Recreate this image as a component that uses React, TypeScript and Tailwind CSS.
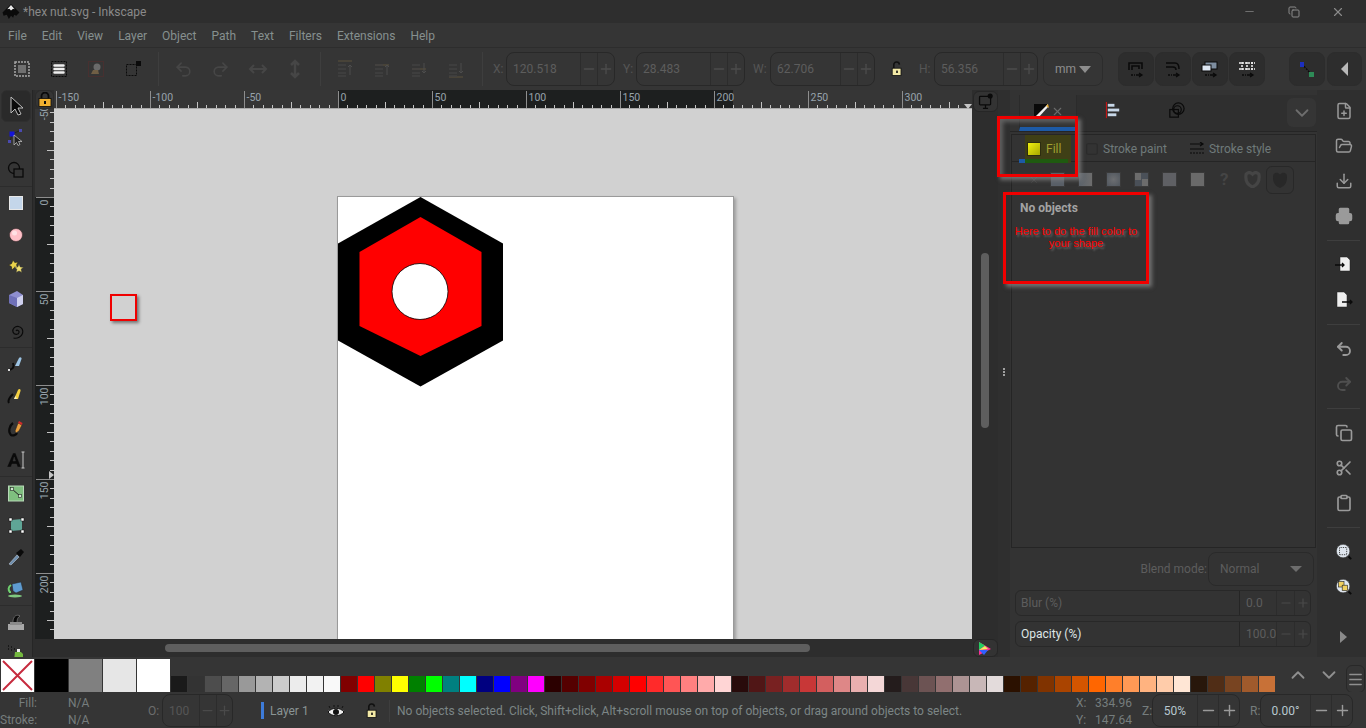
import { Minus, Plus, ChevronDown, ChevronUp, FilePlus, FolderOpen, Download, Printer, Undo2, Redo2, Copy, Scissors, Clipboard, Menu, X, Square } from "lucide-react";
import type { ReactNode } from "react";

const menuItems = ["File", "Edit", "View", "Layer", "Object", "Path", "Text", "Filters", "Extensions", "Help"];

const grays = ["bg-[#1a1a1a]", "bg-[#333333]", "bg-[#4d4d4d]", "bg-[#666666]", "bg-[#999999]", "bg-[#b3b3b3]", "bg-[#cccccc]", "bg-[#ececec]", "bg-[#f2f2f2]", "bg-[#f9f9f9]"];
const basics = ["bg-[#800000]", "bg-[#ff0000]", "bg-[#808000]", "bg-[#ffff00]", "bg-[#008000]", "bg-[#00ff00]", "bg-[#008080]", "bg-[#00ffff]", "bg-[#000080]", "bg-[#0000ff]", "bg-[#800080]", "bg-[#ff00ff]"];
const reds = ["bg-[#2b0000]", "bg-[#550000]", "bg-[#800000]", "bg-[#aa0000]", "bg-[#d40000]", "bg-[#ff0000]", "bg-[#ff2a2a]", "bg-[#ff5555]", "bg-[#ff8080]", "bg-[#ffaaaa]", "bg-[#ffd5d5]"];
const dullReds = ["bg-[#280b0b]", "bg-[#501616]", "bg-[#782121]", "bg-[#a02c2c]", "bg-[#c83737]", "bg-[#d35f5f]", "bg-[#de8787]", "bg-[#e9afaf]", "bg-[#f4d7d7]"];
const browns = ["bg-[#241c1c]", "bg-[#483737]", "bg-[#6c5353]", "bg-[#916f6f]", "bg-[#ac9393]", "bg-[#c8b7b7]", "bg-[#e3dbdb]"];
const oranges = ["bg-[#2b1100]", "bg-[#552200]", "bg-[#803300]", "bg-[#aa4400]", "bg-[#d45500]", "bg-[#ff6600]", "bg-[#ff7f2a]", "bg-[#ff9955]", "bg-[#ffb380]", "bg-[#ffccaa]", "bg-[#ffe6d5]"];
const dullOranges = ["bg-[#28170b]", "bg-[#502d16]", "bg-[#784421]", "bg-[#a05a2c]", "bg-[#c87137]"];
const swatches = [...grays, ...basics, ...reds, ...dullReds, ...browns, ...oranges, ...dullOranges];

const PX_PER_UNIT = 1.88;

function Svg({ children, size = 20 }: { children: ReactNode; size?: number }) {
  return (
    <svg width={size} height={size} viewBox="0 0 20 20" fill="none">
      {children}
    </svg>
  );
}

function OpenLock() {
  return (
    <Svg size={16}>
      <path d="M6 9V5a3.500 3.500 0 0 1 7-.5" stroke="#111" strokeWidth="2" />
      <rect x="4" y="9" width="11" height="9" fill="#f3e9a6" stroke="#111" />
      <rect x="9" y="12" width="2" height="3" fill="#111" />
    </Svg>
  );
}

const toolIcons: ReactNode[] = [
  <path d="M5 1v16l4-4 3 6 3-1-3-6h5z" fill="#0a0a0a" stroke="#bdbdbd" strokeWidth="1" />,
  <>
    <path d="M6 6l7-3M6 6L4 14" stroke="#222" />
    <rect x="3.500" y="3.500" width="5" height="5" fill="#1414d8" />
    <rect x="13" y="1" width="3" height="3" fill="#4a4ab0" />
    <rect x="2" y="12" width="3" height="3" fill="#4a4ab0" />
    <path d="M8 7v10l2.500-2.500 1.500 3 2-1-1.500-3H16z" fill="#222" stroke="#ccc" strokeWidth=".7" />
  </>,
  <>
    <circle cx="8" cy="8" r="5.500" stroke="#0a0a0a" strokeWidth="1.300" />
    <rect x="8" y="9" width="9" height="8" fill="#353535" stroke="#0a0a0a" strokeWidth="1.300" />
  </>,
  <rect x="3.500" y="3.500" width="13" height="13" fill="#c4d6ea" stroke="#e8e8e8" strokeWidth="1" />,
  <>
    <circle cx="10" cy="10" r="6.500" fill="#ffc0c8" stroke="#3a2a2a" strokeWidth=".6" />
    <circle cx="8.500" cy="8" r="2.500" fill="#ffe0e4" />
  </>,
  <>
    <path d="M7 3l1.800 2.600L12 5l-1.500 3 1.500 3-3.500-.6L6 13l-.6-3.400L2.500 8l3-1.300z" fill="#e8d24a" stroke="#222" strokeWidth=".6" />
    <path d="M13 7l1.300 3 3.200.2-2.400 2.100.8 3.200L13 14l-2.900 1.500.8-3.200-2.400-2.100 3.200-.2z" fill="#f0e070" stroke="#333" strokeWidth=".5" />
  </>,
  <>
    <path d="M3 6l8-4 6 4v9l-6 3-8-4z" fill="#8f8fd0" />
    <path d="M11 9l6-3v9l-6 3z" fill="#cfd0ee" />
    <path d="M3 6l8 3v9l-8-4z" fill="#6f70b8" />
  </>,
  <path d="M10 10c1-1.500 3.500-.5 3 1.500-.5 2.500-5 2.500-6-.5s2-6 5.500-5.500 5 4 4 7-5 5.500-9 4.500" stroke="#0a0a0a" strokeWidth="1.200" />,
  <>
    <path d="M2 16c3 0 7-2 5-7" stroke="#0a0a0a" strokeWidth="2" />
    <path d="M9 12l4-8c1-1.500 3-.5 2.500 1L13 12z" fill="#9cc4e4" />
    <rect x="2" y="15" width="2" height="2" fill="#ddd" />
  </>,
  <>
    <path d="M3 17c-2-3 2-7 4-9" stroke="#0a0a0a" strokeWidth="2" />
    <path d="M8 13l4-9c1-2 3-1 2.500 1L12 13z" fill="#f4d040" />
    <path d="M11 13l-3 0 1.500-3z" fill="#f7f0c0" />
  </>,
  <>
    <path d="M7 5c-4 3-5 9-2 12 2 1 5 0 6-2" stroke="#0a0a0a" strokeWidth="2.200" />
    <path d="M9 13l3-8 4 2-3 6-3 2z" fill="#e8a040" stroke="#222" strokeWidth=".6" />
    <path d="M12 5l1-2 3.500 2-.5 2z" fill="#d02a2a" />
  </>,
  <>
    <path d="M1 17L7 3h2.500L15 17h-3.500l-1-3H6l-1 3zM7 11h2.500L8.200 7z" fill="#0a0a0a" stroke="#3a3a3a" strokeWidth=".4" />
    <path d="M17 2v16M15.500 2h3M15.500 18h3" stroke="#c8c8c8" strokeWidth="1" />
  </>,
  <>
    <rect x="2.500" y="3" width="15" height="15" fill="#7fbf7f" stroke="#b8d8b8" />
    <path d="M6 6l8 7" stroke="#222" />
    <rect x="4.500" y="4.500" width="3" height="3" fill="#cfe8cf" stroke="#222" strokeWidth=".6" />
    <rect x="12.500" y="11.500" width="3" height="3" fill="#cfe8cf" stroke="#222" strokeWidth=".6" />
  </>,
  <>
    <path d="M5 5l11-1 0 11-11 1z" fill="#5fa596" />
    <rect x="3" y="3" width="3" height="3" fill="#fff" stroke="#111" strokeWidth=".5" />
    <rect x="15" y="3" width="3" height="3" fill="#fff" stroke="#111" strokeWidth=".5" />
    <rect x="3" y="15" width="3" height="3" fill="#fff" stroke="#111" strokeWidth=".5" />
    <rect x="15" y="15" width="3" height="3" fill="#fff" stroke="#111" strokeWidth=".5" />
  </>,
  <>
    <path d="M3 17l8-9 2 2-8 8z" fill="#6f8faf" stroke="#c8d4e0" strokeWidth=".5" />
    <path d="M10 6l5-4 3 3-4 5z" fill="#0a0a0a" />
  </>,
  <>
    <path d="M6 5l9-2 2 8-7 3-3-2z" fill="#5e9bd0" stroke="#222" strokeWidth=".5" />
    <path d="M5 6c-3 2-3 5-1 7v1" stroke="#6ed06e" strokeWidth="2" />
    <ellipse cx="9" cy="17" rx="7" ry="1.500" fill="#7fc87f" />
  </>,
  <>
    <rect x="2" y="12" width="16" height="6" fill="#a8a8a8" />
    <rect x="4" y="10" width="12" height="3" fill="#8a8a8a" />
    <path d="M7 10c0-6 4-8 7-6-2 1-3 3-3 6" fill="#0a0a0a" stroke="#bbb" strokeWidth=".4" />
  </>,
  <>
    <path d="M9 8h6l2 2v6H8z" fill="#74b83f" />
    <rect x="11" y="5" width="3" height="3" fill="#eee" />
    <path d="M2 2h1M5 3h1M2 5h1M5 6h1M8 5h1" stroke="#111" strokeWidth="1.500" />
  </>,
];

function ToolButton({ active, children }: { active?: boolean; children: ReactNode }) {
  return (
    <div className={`mx-[1px] flex h-[32px] shrink-0 items-center justify-center rounded-md ${active ? "bg-[#2a2a2a] border border-[#2f2f2f]" : ""}`}>
      <Svg>{children}</Svg>
    </div>
  );
}

function LeftToolbar() {
  const separators = [3, 8, 12, 16];
  return (
    <div className="flex h-full w-[33px] shrink-0 flex-col overflow-hidden border-r border-[#262626] bg-[#353535]">
      {toolIcons.map((icon, i) => (
        <div key={i}>
          {separators.includes(i) && <div className="h-[1px] bg-[#2c2c2c]" />}
          <ToolButton active={i === 0}>{icon}</ToolButton>
        </div>
      ))}
    </div>
  );
}

function TopBarButton({ children }: { children: ReactNode }) {
  return <div className="flex h-[34px] w-[37px] shrink-0 items-center justify-center">{children}</div>;
}

function BarSep() {
  return (
    <div className="flex h-full w-[14px] shrink-0 justify-center py-[4px]">
      <div className="w-[1px] bg-[#3e3e3e]" />
    </div>
  );
}

function SpinBox({ value, className }: { value: string; className: string }) {
  return (
    <div className={`flex h-[34px] shrink-0 items-center rounded-lg border border-[#282828] text-[#5d5d5d] ${className}`}>
      <span className="flex-1 pl-[6px] text-[12px]">{value}</span>
      <span className="flex h-full w-[17px] items-center justify-center border-l border-[#2c2c2c]">
        <Minus size={16} className="text-[#4c4c4c]" />
      </span>
      <span className="flex h-full w-[17px] items-center justify-center border-l border-[#2c2c2c]">
        <Plus size={16} className="text-[#4c4c4c]" />
      </span>
    </div>
  );
}

function DarkButton({ children, className }: { children: ReactNode; className: string }) {
  return <div className={`flex h-[34px] shrink-0 items-center justify-center rounded-lg border border-[#2c2c2c] bg-[#2d2d2d] ${className}`}>{children}</div>;
}

function SnapIcon({ children }: { children: ReactNode }) {
  return (
    <Svg>
      {children}
      <path d="M10 16h6M13 14l3 2-3 2" stroke="#0a0a0a" strokeWidth="1.300" />
      <path d="M5 16h2M8 16h1" stroke="#0a0a0a" strokeWidth="1.300" />
    </Svg>
  );
}

function TopToolbar() {
  const dim = "#464646";
  return (
    <div className="flex h-[43px] shrink-0 items-center border-t border-[#2d2d2d] bg-[#353535] pl-[3px]">
      <TopBarButton>
        <Svg>
          <rect x="3" y="3" width="14" height="14" stroke="#a8a8a8" strokeWidth="1.500" strokeDasharray="2 1" />
          <rect x="6" y="6" width="8" height="8" fill="#707070" />
        </Svg>
      </TopBarButton>
      <TopBarButton>
        <Svg>
          <rect x="2.500" y="2.500" width="15" height="15" stroke="#0a0a0a" strokeDasharray="2 1" />
          <path d="M5.500 6.500h9M5.500 10h9M5.500 13.500h9" stroke="#eee" strokeWidth="2.500" strokeLinecap="round" />
        </Svg>
      </TopBarButton>
      <TopBarButton>
        <Svg>
          <rect x="2.500" y="2.500" width="15" height="15" stroke="#5a2c2c" strokeDasharray="1 1" />
          <circle cx="11" cy="8" r="3.500" fill="#6a6a6a" />
          <path d="M5 15l2-4h5l1 4z" fill="#705f45" />
        </Svg>
      </TopBarButton>
      <TopBarButton>
        <Svg>
          <rect x="3.500" y="5.500" width="10" height="11" stroke="#0a0a0a" strokeDasharray="2 1" />
          <rect x="13" y="2" width="5" height="5" fill="#0a0a0a" />
        </Svg>
      </TopBarButton>
      <BarSep />
      <TopBarButton>
        <Undo2 size={19} className="text-[#464646]" />
      </TopBarButton>
      <TopBarButton>
        <Redo2 size={19} className="text-[#464646]" />
      </TopBarButton>
      <TopBarButton>
        <Svg>
          <path d="M2 10h16M6 6l-4 4 4 4M14 6l4 4-4 4" stroke={dim} strokeWidth="2" />
        </Svg>
      </TopBarButton>
      <TopBarButton>
        <Svg>
          <path d="M10 2v16M6 6l4-4 4 4M6 14l4 4 4-4" stroke={dim} strokeWidth="2.500" />
        </Svg>
      </TopBarButton>
      <BarSep />
      {[0, 1, 2, 3].map((i) => (
        <TopBarButton key={i}>
          <Svg>
            <path d={i === 0 ? "M2 2h14" : i === 3 ? "M2 18h14" : i === 2 ? "M2 10h14" : "M2 6h14"} stroke="#544c3c" strokeWidth="1.300" />
            <path d="M2 6h8M2 10h8M2 14h8M2 17h8" stroke="#424242" strokeWidth="1.500" />
            <path d={i < 2 ? "M14 16V6M12 8l2-2 2 2" : "M14 4v10M12 12l2 2 2-2"} stroke="#4d4d4d" strokeWidth="1" />
          </Svg>
        </TopBarButton>
      ))}
      <BarSep />
      <span className="w-[17px] shrink-0 pl-[4px] text-[12px] text-[#555555]">X:</span>
      <SpinBox value="120.518" className="w-[109px]" />
      <span className="w-[21px] shrink-0 pl-[8px] text-[12px] text-[#555555]">Y:</span>
      <SpinBox value="28.483" className="w-[109px]" />
      <span className="w-[25px] shrink-0 pl-[8px] text-[12px] text-[#555555]">W:</span>
      <SpinBox value="62.706" className="w-[105px]" />
      <div className="flex w-[44px] shrink-0 justify-center">
        <OpenLock />
      </div>
      <span className="w-[15px] shrink-0 text-[12px] text-[#555555]">H:</span>
      <SpinBox value="56.356" className="w-[104px]" />
      <div className="ml-[5px] flex h-[34px] w-[60px] shrink-0 items-center justify-center gap-[3px] rounded-lg border border-[#2c2c2c] text-[12px] text-[#8d8d8d]">
        mm
        <span className="h-0 w-0 border-x-[6px] border-t-[7px] border-x-transparent border-t-[#8d8d8d]" />
      </div>
      <div className="ml-[15px] flex gap-[1px]">
        <DarkButton className="w-[36px]">
          <SnapIcon>
            <path d="M3 11V4h13v6M6 11V7h7v3" stroke="#0a0a0a" strokeWidth="1.600" />
          </SnapIcon>
        </DarkButton>
        <DarkButton className="w-[36px]">
          <SnapIcon>
            <path d="M3 4h9c3 0 4 2 4 6M3 8h7c2 0 3 1 3 3" stroke="#0a0a0a" strokeWidth="1.500" />
          </SnapIcon>
        </DarkButton>
        <DarkButton className="w-[36px]">
          <SnapIcon>
            <rect x="5" y="3" width="12" height="7" fill="#7e8ea0" stroke="#0a0a0a" />
            <rect x="2" y="6" width="9" height="6" fill="#dde6f2" stroke="#0a0a0a" />
          </SnapIcon>
        </DarkButton>
        <DarkButton className="w-[36px]">
          <SnapIcon>
            <path d="M2 4h16M2 10h16M5 3v8M10 3v8M15 3v8" stroke="#f2f2f2" strokeWidth="1.500" strokeDasharray="2 1" />
          </SnapIcon>
        </DarkButton>
      </div>
      <div className="ml-[24px] flex gap-[2px]">
        <DarkButton className="w-[36px]">
          <Svg>
            <path d="M5 5l10 11" stroke="#0a0a0a" strokeWidth="1.300" strokeDasharray="2 1" />
            <rect x="3" y="3" width="4" height="5" fill="#1c2fc0" />
            <rect x="12" y="13" width="5" height="5" fill="#2e8b57" />
          </Svg>
        </DarkButton>
        <DarkButton className="w-[35px]">
          <span className="h-0 w-0 border-y-[7px] border-r-[7px] border-y-transparent border-r-[#b9b9b9]" />
        </DarkButton>
      </div>
    </div>
  );
}

function HRuler() {
  const zero = 284;
  const ticks = [];
  for (let i = -30; i <= 68; i++) {
    const x = Math.round(zero + i * 5 * PX_PER_UNIT) + 0.5;
    const major = i % 10 === 0;
    const mid = i % 5 === 0;
    const h = major ? 18 : mid ? 7 : 4;
    ticks.push(<line key={i} x1={x} x2={x} y1={19 - h} y2={19} stroke={major ? "#8e8e8e" : "#c4c4c4"} />);
    if (major) {
      ticks.push(
        <text key={`l${i}`} x={x + 2} y={11} fontSize="10.500" fill="#97a3ab">
          {i * 5}
        </text>,
      );
    }
  }
  return (
    <svg width="918" height="19" className="block">
      <rect width="918" height="19" fill="#363636" />
      <rect x={zero} width="395" height="19" fill="#1d1f1f" />
      {ticks}
      <line x1="0" x2="918" y1="18.500" y2="18.500" stroke="#a9a9a9" />
      <path d="M910 14h8l-4 5z" fill="#c4c4c4" />
    </svg>
  );
}

function VRuler() {
  const zero = 88;
  const ticks = [];
  for (let i = -10; i <= 48; i++) {
    const y = Math.round(zero + i * 5 * PX_PER_UNIT) + 0.5;
    const major = i % 10 === 0;
    const mid = i % 5 === 0;
    const w = major ? 18 : mid ? 7 : 4;
    ticks.push(<line key={i} y1={y} y2={y} x1={19 - w} x2={19} stroke={major ? "#8e8e8e" : "#c4c4c4"} />);
    if (major) {
      ticks.push(
        <text key={`l${i}`} x={13} y={y + 2} fontSize="10.500" fill="#97a3ab" textAnchor="end" transform={`rotate(-90 13 ${y + 2})`}>
          {i * 5}
        </text>,
      );
    }
  }
  return (
    <svg width="19" height="530" className="block shrink-0">
      <rect width="19" height="530" fill="#363636" />
      <rect y={zero} width="19" height="442" fill="#1d1f1f" />
      {ticks}
      <path d="M14 362l5 4-5 4z" fill="#c4c4c4" />
    </svg>
  );
}

function HexNut() {
  return (
    <svg width="170" height="195" className="absolute left-0 top-0">
      <path d="M82.500 0l82.500 46.500v97l-82.500 46-82.500-46v-97z" fill="#000" />
      <path d="M82.500 20l61 35v74l-61 30-61-30V55z" fill="#ff0000" />
      <circle cx="82" cy="94.500" r="28" fill="#fff" stroke="#000" strokeWidth=".8" />
    </svg>
  );
}

function CanvasArea() {
  return (
    <div className="flex h-full w-[937px] shrink-0 flex-col">
      <div className="flex h-[19px] shrink-0">
        <div className="flex w-[19px] shrink-0 items-center justify-center rounded-md border border-[#2b2b2b] bg-[#353535]">
          <svg width="14" height="15" viewBox="0 0 14 15" fill="none">
            <path d="M3.500 7V4a3.500 3.500 0 0 1 7 0v3" stroke="#0a0a0a" strokeWidth="1.800" />
            <rect x="1" y="6.500" width="12" height="8" fill="#f0b030" stroke="#0a0a0a" strokeWidth=".8" />
            <rect x="6" y="9" width="2" height="3" fill="#0a0a0a" />
          </svg>
        </div>
        <HRuler />
      </div>
      <div className="flex h-[530px] shrink-0">
        <VRuler />
        <div className="relative flex-1 overflow-hidden bg-[#d1d1d1]">
          <div className="absolute left-[283px] top-[87px] h-[460px] w-[397px] border border-[#9a9a9a] bg-white shadow-[2px_2px_3px_rgba(0,0,0,0.25)]">
            <HexNut />
          </div>
          <div className="absolute left-[56px] top-[185px] h-[27px] w-[27px] border-2 border-[#f00000] shadow-[2px_2px_3px_rgba(0,0,0,0.45)]" />
        </div>
      </div>
      <div className="flex h-[18px] shrink-0 items-center bg-[#2d2d2d] pl-[130px]">
        <div className="h-[8px] w-[645px] rounded-full bg-[#5e5e5e]" />
      </div>
    </div>
  );
}

function VScrollColumn() {
  return (
    <div className="flex h-full w-[26px] shrink-0 flex-col items-center bg-[#2d2d2d]">
      <div className="mt-[1px] flex h-[21px] w-[25px] shrink-0 items-center justify-center rounded-md border border-[#262626] bg-[#333333]">
        <Svg size={17}>
          <rect x="3" y="4" width="13" height="10" rx="1" stroke="#0a0a0a" strokeWidth="1.500" />
          <path d="M7 18h6M10 14v4" stroke="#0a0a0a" strokeWidth="1.500" />
          <circle cx="15.500" cy="3.500" r="3" fill="#0a0a0a" />
        </Svg>
      </div>
      <div className="mt-[141px] h-[175px] w-[8px] shrink-0 rounded-full bg-[#5e5e5e]" />
      <div className="mt-auto flex h-[18px] w-[25px] shrink-0 items-center justify-center rounded-md border border-[#262626] bg-[#333333]">
        <svg width="14" height="15" viewBox="0 0 14 15">
          <path d="M1 1l12 7-12 6z" fill="#ff3090" />
          <path d="M1 1l6 3.500L1 9z" fill="#22d060" />
          <path d="M1 9l6-4 3 3z" fill="#f0f060" />
          <path d="M1 9l5 5 4-5z" fill="#3060ff" />
        </svg>
      </div>
    </div>
  );
}

function PaintButton({ className }: { className: string }) {
  return <div className={`h-[15px] w-[15px] shrink-0 border border-[#3a3a3a] ${className}`} />;
}

function DockPanel() {
  return (
    <div className="flex h-full w-[307px] shrink-0 flex-col bg-[#333333] text-[12px]">
      <div className="mt-[5px] flex h-[37px] shrink-0 border-b border-[#252525]">
        <div className="ml-[9px] flex w-[58px] shrink-0 items-start justify-center border-x border-[#2b2b2b] border-b-4 border-b-[#1d5aa6] pt-[8px]">
          <svg width="17" height="17" viewBox="0 0 17 17">
            <path d="M1 1h14L1 15z" fill="#0a0a0a" />
            <path d="M15 1v3L5 15H1z" fill="#f2f2f2" />
            <path d="M13 3l2-2 1 4z" fill="#f0b030" />
          </svg>
          <X size={13} className="ml-[1px] mt-[2px] text-[#6b6b6b]" />
        </div>
        <div className="flex flex-1 items-start bg-[#2f2f2f]">
          <div className="ml-[27px] pt-[6px]">
            <Svg size={19}>
              <path d="M2.500 1v17" stroke="#e01010" />
              <rect x="4" y="3" width="7" height="3" fill="#c8d8e8" />
              <rect x="4" y="8" width="12" height="3" fill="#c8d8e8" />
              <rect x="4" y="13" width="9" height="3" fill="#c8d8e8" />
            </Svg>
          </div>
          <div className="ml-[44px] pt-[6px]">
            <Svg size={19}>
              <circle cx="12" cy="8" r="6" stroke="#0a0a0a" strokeWidth="1.300" />
              <circle cx="11" cy="9" r="4" stroke="#0a0a0a" strokeWidth="1.300" />
              <rect x="3" y="9" width="9" height="8" stroke="#0a0a0a" strokeWidth="1.300" />
            </Svg>
          </div>
          <div className="ml-auto mr-[1px] mt-[3px] flex h-[29px] w-[29px] items-center justify-center rounded-md bg-[#353535]">
            <ChevronDown size={22} className="text-[#6d6d6d]" />
          </div>
        </div>
      </div>
      <div className="ml-[1px] mr-[1px] mt-[2px] flex h-[414px] shrink-0 flex-col border border-[#252525]">
        <div className="flex h-[27px] shrink-0 items-center border-b border-[#252525] pl-[73px] pt-[1px]">
          <Square size={14} className="text-[#2a2a2a]" />
          <span className="ml-[4px] text-[#6f7a7a]">Stroke paint</span>
          <svg width="15" height="13" viewBox="0 0 15 13" className="ml-[23px]">
            <path d="M0 2h13M10 0l3 2-3 2M0 7h14" stroke="#0a0a0a" strokeWidth="1.200" fill="none" />
            <path d="M0 11h14" stroke="#0a0a0a" strokeWidth="1.200" strokeDasharray="2 1" />
          </svg>
          <span className="ml-[4px] text-[#6f7a7a]">Stroke style</span>
        </div>
        <div className="mt-[10px] flex h-[15px] shrink-0 items-center pl-[17px]">
          <X size={10} className="mr-[11px] text-[#454545]" />
          <PaintButton className="bg-[#5a6068]" />
          <PaintButton className="ml-[13px] bg-[linear-gradient(90deg,#5c636b,#6d6d6d)]" />
          <PaintButton className="ml-[13px] bg-[radial-gradient(circle,#6d6f72,#50565e)]" />
          <PaintButton className="ml-[13px] bg-[conic-gradient(#4a5058_25%,#6c6c6c_25%_50%,#4a5058_50%_75%,#6c6c6c_75%)]" />
          <PaintButton className="ml-[13px] bg-[#5f6064]" />
          <PaintButton className="ml-[13px] bg-[#6a6a6a]" />
          <span className="ml-[15px] w-[12px] text-[17px] font-bold text-[#454545]">?</span>
          <svg width="17" height="17" viewBox="0 0 16 16" className="ml-[12px]">
            <path d="M8 15C3 13 1 9 2 3c2-2 4-2 6 0 2-2 4-2 6 0 1 6-1 10-6 12z" fill="none" stroke="#454545" strokeWidth="3" />
          </svg>
          <div className="ml-[5px] flex h-[28px] w-[28px] items-center justify-center rounded-md border border-[#282828]">
            <svg width="18" height="18" viewBox="0 0 16 16">
              <path d="M8 15C3 13 1 9 2 3c2-2 4-2 6 0 2-2 4-2 6 0 1 6-1 10-6 12z" fill="#282828" />
            </svg>
          </div>
        </div>
        <div className="mt-[12px] pl-[8px] font-bold text-[#a3a3a3]">No objects</div>
      </div>
      <div className="mt-[4px] flex h-[34px] shrink-0 items-center justify-end pr-[3px]">
        <span className="mr-[1px] text-[#5d5d5d]">Blend mode:</span>
        <div className="flex h-[34px] w-[106px] items-center justify-between rounded-lg border border-[#2a2a2a] pl-[11px] pr-[11px] text-[#5d5d5d]">
          Normal
          <span className="h-0 w-0 border-x-[6px] border-t-[6px] border-x-transparent border-t-[#6d6d6d]" />
        </div>
      </div>
      <div className="ml-[5px] mt-[4px] flex h-[26px] w-[296px] shrink-0 items-center rounded-md border border-[#282828] pl-[5px] text-[#5d5d5d]">
        <span className="flex-1">Blur (%)</span>
        <span className="flex h-full w-[37px] items-center border-l border-[#252525] pl-[6px]">0.0</span>
        <span className="flex h-full w-[18px] items-center justify-center border-l border-[#2c2c2c]">
          <Minus size={14} className="text-[#4a4a4a]" />
        </span>
        <span className="flex h-full w-[16px] items-center justify-center border-l border-[#2c2c2c]">
          <Plus size={14} className="text-[#4a4a4a]" />
        </span>
      </div>
      <div className="ml-[5px] mt-[5px] flex h-[26px] w-[296px] shrink-0 items-center rounded-md border border-[#282828] pl-[5px] text-[#5d5d5d]">
        <span className="flex-1 text-[#dfe6e6]">Opacity (%)</span>
        <span className="flex h-full w-[37px] items-center border-l border-[#252525] pl-[6px]">100.0</span>
        <span className="flex h-full w-[18px] items-center justify-center border-l border-[#2c2c2c]">
          <Minus size={14} className="text-[#4a4a4a]" />
        </span>
        <span className="flex h-full w-[16px] items-center justify-center border-l border-[#2c2c2c]">
          <Plus size={14} className="text-[#4a4a4a]" />
        </span>
      </div>
    </div>
  );
}

function RightSep() {
  return (
    <div className="flex h-[14px] shrink-0 items-center px-[1px]">
      <div className="h-[1px] w-full bg-[#3e3e3e]" />
    </div>
  );
}

function RightBtn({ children }: { children: ReactNode }) {
  return <div className="flex h-[35px] shrink-0 items-center justify-center text-[#9a9a9a]">{children}</div>;
}

function Magnifier({ children }: { children: ReactNode }) {
  return (
    <Svg size={18}>
      <circle cx="9" cy="9" r="7.500" fill="#dfe6ee" stroke="#333" strokeWidth=".6" />
      {children}
      <path d="M15 15l3 3" stroke="#0a0a0a" strokeWidth="2" />
    </Svg>
  );
}

function RightToolbar() {
  return (
    <div className="ml-[9px] flex h-full w-[35px] shrink-0 flex-col pt-[3.5px]">
      <RightBtn><FilePlus size={18} /></RightBtn>
      <RightBtn><FolderOpen size={18} /></RightBtn>
      <RightBtn><Download size={18} /></RightBtn>
      <RightBtn><Printer size={18} fill="#9a9a9a" /></RightBtn>
      <RightSep />
      <RightBtn>
        <Svg>
          <path d="M6 2h7l3 3v11H6z" fill="#efefef" stroke="#222" strokeWidth=".5" />
          <path d="M1 10h9M8 8l2 2-2 2" stroke="#0a0a0a" strokeWidth="1.300" />
        </Svg>
      </RightBtn>
      <RightBtn>
        <Svg>
          <path d="M3 2h7l3 3v12H3z" fill="#efefef" stroke="#222" strokeWidth=".5" />
          <path d="M8 12h10M16 10l2 2-2 2" stroke="#0a0a0a" strokeWidth="1.300" />
        </Svg>
      </RightBtn>
      <RightSep />
      <RightBtn><Undo2 size={18} strokeWidth={2.500} /></RightBtn>
      <RightBtn><Redo2 size={18} strokeWidth={2.500} className="text-[#4f4f4f]" /></RightBtn>
      <RightSep />
      <RightBtn><Copy size={18} strokeWidth={2.200} /></RightBtn>
      <RightBtn><Scissors size={18} strokeWidth={2.200} /></RightBtn>
      <RightBtn><Clipboard size={18} strokeWidth={2.200} /></RightBtn>
      <RightSep />
      <RightBtn>
        <Magnifier>
          <rect x="5" y="5" width="8" height="8" stroke="#222" strokeDasharray="1 1" />
        </Magnifier>
      </RightBtn>
      <RightBtn>
        <Magnifier>
          <rect x="4" y="4" width="6" height="6" fill="#f0d060" stroke="#222" strokeWidth=".7" />
          <rect x="8" y="8" width="6" height="6" fill="#f0d060" stroke="#222" strokeWidth=".7" />
        </Magnifier>
      </RightBtn>
      <div className="mt-[15px]">
        <RightBtn>
          <span className="h-0 w-0 border-y-[6px] border-l-[7px] border-y-transparent border-l-[#8a8a8a]" />
        </RightBtn>
      </div>
    </div>
  );
}

function Palette() {
  return (
    <div className="flex h-[35px] shrink-0 items-end bg-[#353535] pl-[1px]">
      <div className="mb-0 flex h-[33px] w-[33px] shrink-0 items-center justify-center bg-white">
        <svg width="33" height="33" viewBox="0 0 33 33">
          <path d="M2 2l29 29M31 2L2 31" stroke="#c62b3e" strokeWidth="2" />
        </svg>
      </div>
      <div className="ml-[1px] h-[33px] w-[33px] shrink-0 bg-black" />
      <div className="ml-[1px] h-[33px] w-[33px] shrink-0 bg-[#808080]" />
      <div className="ml-[1px] h-[33px] w-[33px] shrink-0 bg-[#e6e6e6]" />
      <div className="ml-[1px] h-[33px] w-[33px] shrink-0 bg-white" />
      {swatches.map((c, i) => (
        <div key={i} className="flex h-[16px] w-[17px] shrink-0 justify-end">
          <div className={`h-full w-[16px] ${c}`} />
        </div>
      ))}
      <div className="flex h-full flex-1 items-center text-[#8f8f8f]">
        <ChevronUp size={22} className="ml-[12px]" />
        <ChevronDown size={22} className="ml-[9px]" />
        <div className="ml-[6px] mt-[9px] flex h-[28px] w-[19px] items-center justify-center rounded-md border border-[#282828]">
          <Menu size={17} />
        </div>
      </div>
    </div>
  );
}

function StatusSpin({ value, className }: { value: string; className: string }) {
  return (
    <div className={`flex h-[33px] shrink-0 items-center rounded-lg border border-[#282828] ${className}`}>
      <span className="flex-1 text-center text-[12px] text-[#b8c8d0]">{value}</span>
      <span className="flex h-full w-[21px] items-center justify-center border-l border-[#2c2c2c]">
        <Minus size={17} className="text-[#9a9a9a]" />
      </span>
      <span className="flex h-full w-[21px] items-center justify-center border-l border-[#2c2c2c]">
        <Plus size={17} className="text-[#9a9a9a]" />
      </span>
    </div>
  );
}

function StatusBar() {
  return (
    <div className="flex h-[36px] shrink-0 items-center bg-[#353535] pt-[1px] text-[12px] text-[#757d7d]">
      <div className="mt-[2px] w-[37px] shrink-0 text-right leading-[17px]">
        <div>Fill:</div>
        <div>Stroke:</div>
      </div>
      <div className="ml-[31px] mt-[2px] w-[80px] shrink-0 leading-[17px]">
        <div>N/A</div>
        <div>N/A</div>
      </div>
      <span className="w-[14px] shrink-0 text-[#6d6d6d]">O:</span>
      <div className="flex h-[33px] w-[71px] shrink-0 items-center rounded-lg border border-[#282828] text-[#555555]">
        <span className="w-[36px] pl-[6px]">100</span>
        <span className="flex h-full flex-1 items-center justify-center border-l border-[#2c2c2c]">
          <Minus size={15} className="text-[#4a4a4a]" />
        </span>
        <span className="flex h-full flex-1 items-center justify-center border-l border-[#2c2c2c]">
          <Plus size={15} className="text-[#4a4a4a]" />
        </span>
      </div>
      <div className="ml-[28px] h-[17px] w-[3px] shrink-0 bg-[#3d7bd8]" />
      <span className="ml-[6px] mt-[1px] w-[50px] shrink-0 text-[#8a9494]">Layer 1</span>
      <div className="flex w-[32px] shrink-0 justify-center">
        <svg width="18" height="14" viewBox="0 0 18 14">
          <path d="M1 8c4-5 12-5 16 0-4 5-12 5-16 0z" fill="#eee" stroke="#111" />
          <circle cx="9" cy="8" r="3" fill="#111" />
          <path d="M3 4L2 2M7 3V1M11 3v-2M15 4l1-2" stroke="#111" />
        </svg>
      </div>
      <div className="ml-[2px] flex w-[35px] shrink-0 justify-center">
        <OpenLock />
      </div>
      <div className="h-[22px] w-[1px] shrink-0 bg-[#3e3e3e]" />
      <span className="ml-[7px] mt-[1px] w-[679px] shrink-0 whitespace-nowrap text-[12px] text-[#7c8686]">
        No objects selected. Click, Shift+click, Alt+scroll mouse on top of objects, or drag around objects to select.
      </span>
      <div className="mt-[2px] flex w-[56px] shrink-0 flex-col leading-[17px]">
        <div className="flex justify-between"><span>X:</span><span>334.96</span></div>
        <div className="flex justify-between"><span>Y:</span><span>147.64</span></div>
      </div>
      <span className="ml-[10px] w-[10px] shrink-0">Z:</span>
      <StatusSpin value="50%" className="w-[88px]" />
      <span className="ml-[10px] w-[10px] shrink-0">R:</span>
      <StatusSpin value="0.00°" className="w-[93px]" />
    </div>
  );
}

export default function App() {
  return (
    <div className="relative flex h-[728px] w-[1366px] flex-col overflow-hidden bg-[#353535] [font-family:Roboto,sans-serif]">
      <div className="flex h-[23px] shrink-0 items-center bg-[#2e2e2e]">
        <div className="ml-[2px] w-[21px] shrink-0">
          <svg width="18" height="18" viewBox="0 0 17 15">
            <path d="M8.500 0l8 8-3 3-2-1-1 3-2-2-2 3-2-4-3 1-1-3z" fill="#0a0a0a" />
            <path d="M8.500 1L5 5l2-.5 1.500 1.500 2-1.500 1.500.5z" fill="#e8e8e8" />
          </svg>
        </div>
        <span className="text-[12px] text-[#8a8a8a]">*hex nut.svg - Inkscape</span>
        <Minus size={13} className="ml-auto text-[#6f6f6f]" />
        <Copy size={12} className="ml-[32px] text-[#8a8a8a]" />
        <X size={14} className="ml-[31px] mr-[21px] text-[#8a8a8a]" />
      </div>
      <div className="flex h-[24px] shrink-0 items-center gap-[15px] bg-[#353535] pl-[8px] pt-[1px] text-[12px] text-[#86908f]">
        {menuItems.map((m) => (
          <span key={m}>{m}</span>
        ))}
      </div>
      <TopToolbar />
      <div className="relative flex h-[567px] shrink-0 bg-[#2f2f2f]">
        <LeftToolbar />
        <div className="w-[2px] shrink-0 bg-[#2d2d2d]" />
        <CanvasArea />
        <VScrollColumn />
        <div className="flex h-full w-[12px] shrink-0 flex-col items-center justify-center gap-[1px] pb-[3px]">
          <div className="h-[2px] w-[2px] bg-[#a0a0a0]" />
          <div className="h-[2px] w-[2px] bg-[#a0a0a0]" />
          <div className="h-[2px] w-[2px] bg-[#a0a0a0]" />
        </div>
        <DockPanel />
        <RightToolbar />
        <div className="absolute left-[1019px] top-[45px] flex h-[28px] w-[52px] items-center">
          <div className="absolute inset-y-0 left-[6px] right-0 bg-[#3f3f16]" />
          <div className="absolute bottom-0 left-0 h-[4px] w-[6px] bg-[#1d5aa6]" />
          <div className="absolute bottom-0 left-[6px] h-[4px] w-[43px] bg-[#1f5a10]" />
          <div className="relative ml-[8px] h-[14px] w-[14px] border border-[#2d2d10] bg-[linear-gradient(135deg,#f0f010,#a8a800)]" />
          <span className="relative ml-[5px] text-[12px] text-[#a0a030]">Fill</span>
        </div>
        <div className="absolute left-[997px] top-[26px] h-[61px] w-[81px] border-[3px] border-[#f00000] shadow-[3px_3px_4px_rgba(130,130,130,0.8),inset_3px_3px_4px_rgba(130,130,130,0.6)]" />
        <div className="absolute left-[1003px] top-[102px] flex h-[92px] w-[146px] flex-col border-[3px] border-[#f00000] pt-[30px] shadow-[3px_3px_4px_rgba(130,130,130,0.8)]">
          <p className="text-center text-[11px] leading-[12px] text-[#ff0000] [font-family:'Liberation_Sans',sans-serif] [text-shadow:2px_2px_2px_rgba(120,120,120,0.8)]">
            Here to do the fill color to
            <br />
            your shape
          </p>
        </div>
      </div>
      <Palette />
      <StatusBar />
    </div>
  );
}
